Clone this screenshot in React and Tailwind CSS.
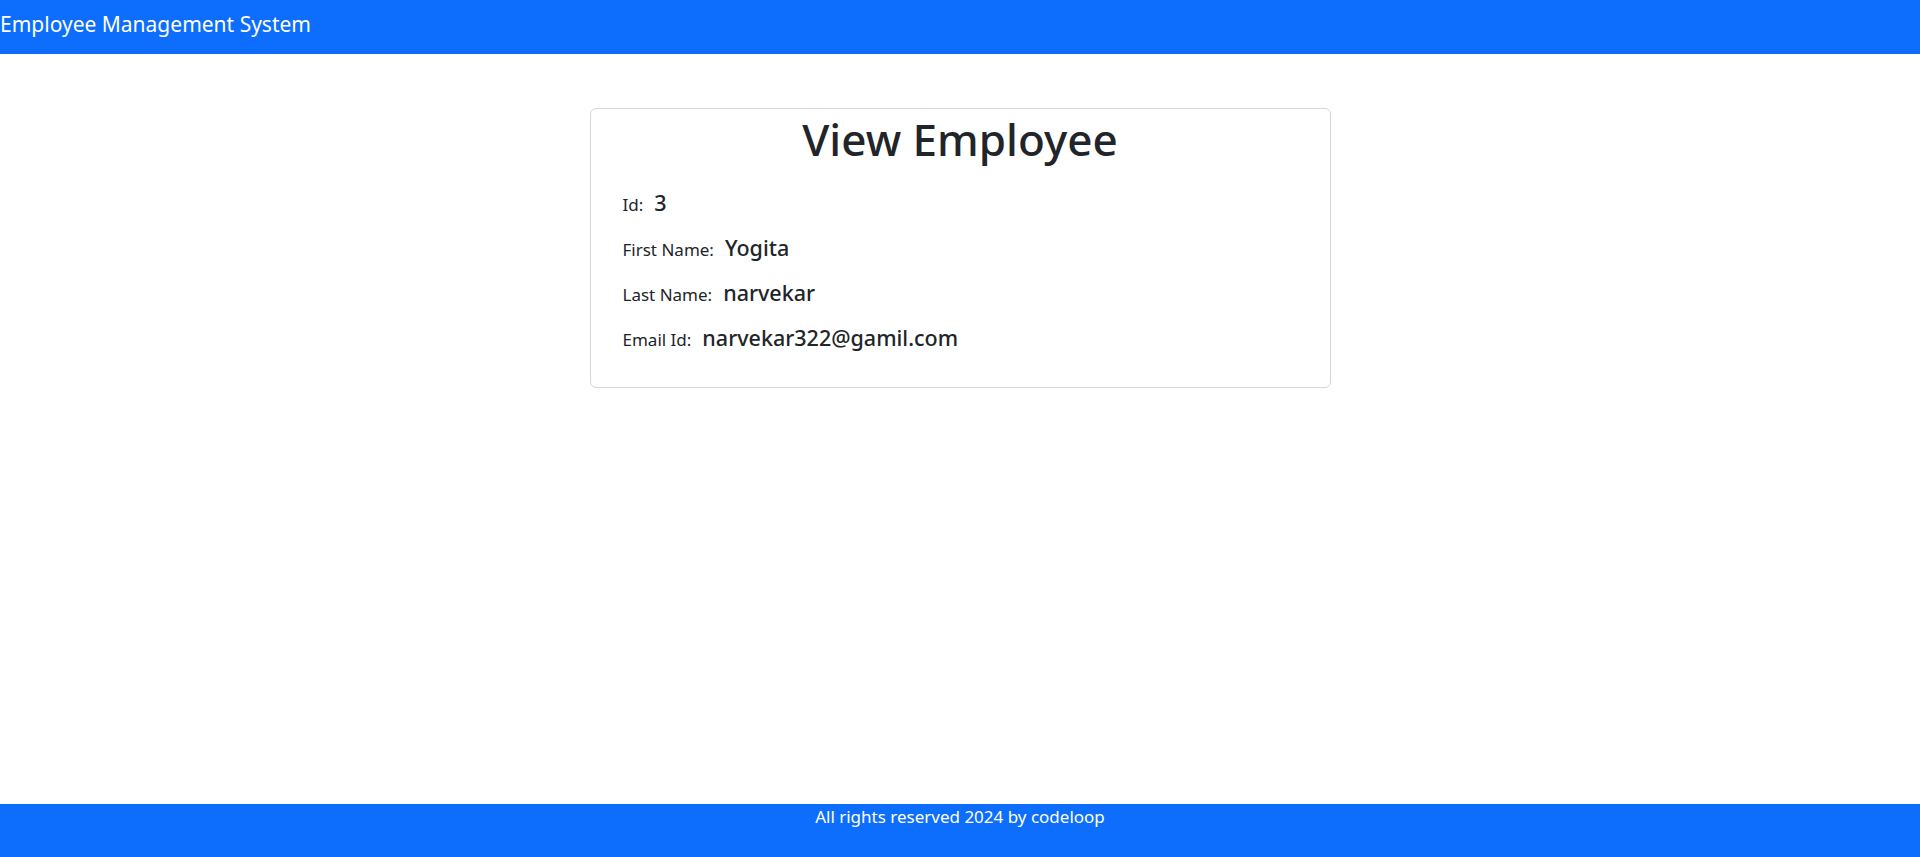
export default function App() {
  const rows = [
    { label: "Id:", value: "3" },
    { label: "First Name:", value: "Yogita" },
    { label: "Last Name:", value: "narvekar" },
    { label: "Email Id:", value: "narvekar322@gamil.com" },
  ];
  return (
    <div
      className="flex min-h-screen flex-col bg-white text-[#212529]"
      style={{ fontFamily: '"Noto Sans", "Open Sans", sans-serif' }}
    >
      <header className="flex h-[54px] items-start bg-[#0d6efd] text-white">
        <span className="pt-[10px] text-[21px] leading-[28px]">Employee Management System</span>
      </header>
      <main className="flex flex-1 justify-center">
        <div className="mt-[54px] h-[280px] w-[741px] rounded-[6px] border border-[#d6d6d6] px-[32px]">
          <h1 className="pt-[2px] text-center text-[44px] font-medium leading-[56px]">View Employee</h1>
          <div className="mt-[20px] flex flex-col">
            {rows.map((r) => (
              <div key={r.label} className="flex h-[45px] items-baseline gap-[11px]">
                <span className="text-[17px]">{r.label}</span>
                <span className="text-[21.5px] font-medium">{r.value}</span>
              </div>
            ))}
          </div>
        </div>
      </main>
      <footer className="flex h-[53px] justify-center bg-[#0d6efd] text-white">
        <span className="pt-[0px] text-[17px] leading-[26px]">All rights reserved 2024 by codeloop</span>
      </footer>
    </div>
  );
}
